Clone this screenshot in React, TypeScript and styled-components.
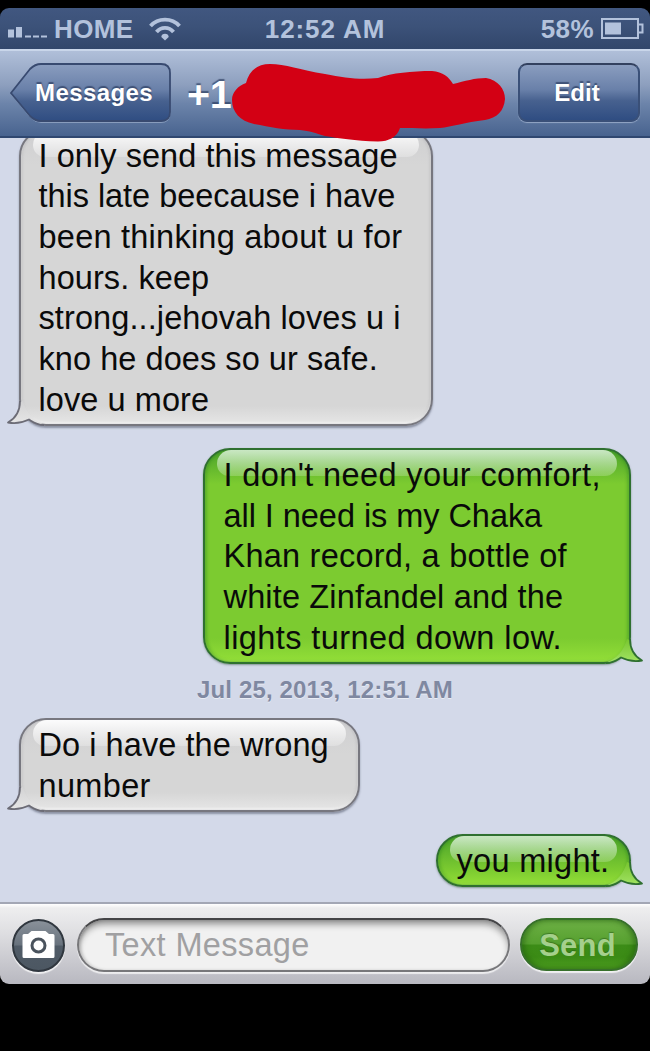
import React from "react";
import styled, { createGlobalStyle, css } from "styled-components";

const GlobalStyle = createGlobalStyle`
  * { box-sizing: border-box; }
  html, body { margin: 0; padding: 0; background: #000; }
  body { font-family: "Liberation Sans", Arial, sans-serif; }
`;

const Screen = styled.main`
  width: 650px;
  height: 1051px;
  padding-top: 8px;
  background: #000;
  overflow: hidden;
  display: flex;
  flex-direction: column;
`;

const StatusBar = styled.header`
  flex: none;
  height: 41px;
  padding: 0 8px;
  display: grid;
  grid-template-columns: 1fr auto 1fr;
  align-items: center;
  border-radius: 9px 9px 0 0;
  background: linear-gradient(#415780, #3c5279 45%, #31466b);
  color: #b3c2dc;
  font-size: 26px;
  font-weight: bold;
  line-height: 38px;
`;

const StatusGroup = styled.div<{ $end?: boolean }>`
  display: flex;
  align-items: center;
  justify-content: ${(p) => (p.$end ? "flex-end" : "flex-start")};
`;

const Tracked = styled.span<{ $track?: number }>`
  display: block;
  white-space: nowrap;
  letter-spacing: ${(p) => p.$track ?? 0}px;
`;

const Carrier = styled(Tracked)`
  margin-left: 6px;
`;

const NavBar = styled.nav`
  position: relative;
  z-index: 2;
  flex: none;
  height: 89px;
  padding: 14px 10px 15px;
  display: flex;
  align-items: flex-start;
  justify-content: space-between;
  border-top: 2px solid #c9d6ea;
  border-bottom: 2px solid #2f4770;
  background: linear-gradient(#b0bfd9, #8d9fbe 40%, #6c84aa 62%, #48638f);
`;

const navLabel = css`
  color: #fff;
  font-weight: bold;
  font-size: 24px;
  text-shadow: 0 -2px 1px rgba(35, 52, 88, 0.65);
`;

const BackButton = styled.button`
  ${navLabel}
  position: relative;
  width: 161px;
  height: 60px;
  margin-top: -2px;
  padding: 0 0 0 25px;
  border: 0;
  background: none;
  font-family: inherit;
  text-align: left;
  line-height: 56px;
`;

const BackShape = styled.svg`
  position: absolute;
  inset: 0;
`;

const ButtonLabel = styled.span<{ $track?: number }>`
  position: relative;
  letter-spacing: ${(p) => p.$track ?? 0}px;
`;

const EditButton = styled.button`
  ${navLabel}
  width: 122px;
  height: 59px;
  margin-top: -2px;
  padding: 0 4px 0 0;
  border: 2px solid #3a5078;
  border-top-color: #33415f;
  border-radius: 9px;
  background: linear-gradient(#8a9dbf, #6980a9 45%, #47618f 65%, #2f4d82);
  box-shadow: 0 1px 1px rgba(190, 205, 228, 0.6);
  font-family: inherit;
`;

const Title = styled.h1`
  margin: 2px auto 0 16px;
  color: #fff;
  font-size: 39.5px;
  letter-spacing: -0.3px;
  line-height: 54px;
  text-shadow: 0 -2px 1px rgba(35, 52, 88, 0.65);
`;

const Redaction = styled.svg`
  position: absolute;
  left: 228px;
  top: 9px;
  overflow: visible;
`;

const Conversation = styled.section`
  flex: none;
  height: 764px;
  overflow: hidden;
  display: flex;
  flex-direction: column;
  background: #d3d9e9;
  padding: 0 19px;
`;

const bubbleTone = {
  grey: css`
    align-self: flex-start;
    padding-left: 17.5px;
    border-color: #77777f;
    background: linear-gradient(#cfcfd1, #d6d6d6 34px, #d6d6d6 calc(100% - 18px), #e6e6e6);
    box-shadow: 0 2px 2px rgba(70, 75, 95, 0.5), inset 2px 0 2px rgba(150, 150, 155, 0.2),
      inset -2px 0 2px rgba(150, 150, 155, 0.2), inset 0 -2px 2px rgba(255, 255, 255, 0.5);
  `,
  green: css`
    align-self: flex-end;
    padding-left: 18.5px;
    border-color: #2f7030;
    background: linear-gradient(#4ba32b, #7ccb30 34px, #7ccb30 calc(100% - 24px), #93df38);
    box-shadow: 0 1px 2px rgba(50, 80, 60, 0.5), inset 2px 0 3px rgba(50, 140, 30, 0.45),
      inset -2px 0 3px rgba(50, 140, 30, 0.45), inset 0 -2px 2px rgba(180, 240, 90, 0.5);
  `,
};

const BubbleBox = styled.article<{ $tone: "grey" | "green"; $w: number; $top: number }>`
  position: relative;
  flex: none;
  width: ${(p) => p.$w}px;
  margin-top: ${(p) => p.$top}px;
  padding-top: 4.8px;
  padding-bottom: 3.8px;
  border: 2px solid;
  border-radius: 27px;
  color: #0a0a0a;
  font-size: 32.5px;
  line-height: 40.65px;
  ${(p) => bubbleTone[p.$tone]}
`;

const Gloss = styled.div<{ $tone: "grey" | "green" }>`
  position: absolute;
  left: 12px;
  right: 12px;
  top: 0;
  height: 26px;
  border-radius: 14px 14px 12px 12px;
  background: ${(p) =>
    p.$tone === "grey"
      ? "linear-gradient(rgba(255,255,255,.95), rgba(255,255,255,.25))"
      : "linear-gradient(rgba(235,250,235,.8), rgba(225,245,215,.25))"};
`;

const Tail = styled.svg<{ $tone: "grey" | "green" }>`
  position: absolute;
  bottom: -2px;
  overflow: visible;
  ${(p) => (p.$tone === "grey" ? "left: -14px;" : "right: -14px; transform: scaleX(-1);")}
`;

const Line = styled(Tracked)`
  position: relative;
`;

const Timestamp = styled.time`
  flex: none;
  align-self: center;
  margin-top: 12px;
  height: 28px;
  color: #7f88a1;
  font-size: 24px;
  font-weight: bold;
  letter-spacing: 0.15px;
  line-height: 28px;
  text-shadow: 0 1px 0 rgba(255, 255, 255, 0.5);
`;

const Composer = styled.footer`
  flex: none;
  height: 82px;
  padding: 12px 12px 0;
  display: flex;
  border-top: 2px solid #a3a7b5;
  border-radius: 0 0 9px 9px;
  background: linear-gradient(#fff, #eeeeef 4px, #dfdfe2 35%, #b8b8c0);
`;

const CameraButton = styled.button`
  width: 53px;
  height: 53px;
  margin: 3px 12px 0 0;
  padding: 0 0 3px;
  border: 2px solid #30373f;
  border-radius: 50%;
  background: linear-gradient(#89919a, #68727d 49%, #505b67 51%, #4c5762);
  box-shadow: 0 2px 1px rgba(255, 255, 255, 0.75);
`;

const CameraIcon = styled.svg`
  display: block;
  margin: 0 auto;
`;

const Field = styled.div`
  width: 433px;
  height: 54px;
  margin: 2px 10px 0 0;
  padding-left: 26px;
  border: 2px solid #77777a;
  border-top-color: #454547;
  border-radius: 27px;
  background: #f1f1f1;
  box-shadow: inset 0 6px 7px -2px rgba(0, 0, 0, 0.42), inset 2px 0 3px rgba(0, 0, 0, 0.15),
    0 2px 1px rgba(255, 255, 255, 0.7);
  color: #a0a0a2;
  font-size: 32.5px;
  line-height: 51px;
`;

const SendButton = styled.button`
  width: 118px;
  height: 53px;
  margin-top: 2px;
  padding: 2px 3px 0 0;
  border: 2px solid #37702a;
  border-radius: 27px;
  background: linear-gradient(#6db045, #56a02f 48%, #3c8c17 52%, #3b8b15 75%, #4d9d20);
  box-shadow: 0 2px 1px rgba(255, 255, 255, 0.75), inset 3px 0 5px rgba(35, 95, 15, 0.5),
    inset -3px 0 5px rgba(35, 95, 15, 0.5);
  color: #a5d08c;
  font-family: inherit;
  font-size: 31px;
  font-weight: bold;
  text-shadow: 0 -1px 1px rgba(30, 80, 15, 0.5);
`;

type TextLine = [text: string, track: number];

function Bubble({ tone, width, top, lines }: { tone: "grey" | "green"; width: number; top: number; lines: TextLine[] }) {
  const grey = tone === "grey";
  const id = `tail-${tone}`;
  return (
    <BubbleBox $tone={tone} $w={width} $top={top}>
      <Gloss $tone={tone} />
      <Tail $tone={tone} width="40" height="30" viewBox="0 0 40 30">
        <defs>
          <linearGradient id={id} x1="0" y1="0" x2="0" y2="1">
            <stop offset="0" stopColor={grey ? "#d3d3d4" : "#78c52f"} />
            <stop offset="1" stopColor={grey ? "#e6e6e6" : "#a2e364"} />
          </linearGradient>
        </defs>
        <path d="M13 6 C13 16 9 22 1 26.500 C9 28 15 27 22 23.500 C26 26 29 28.500 37 28.500 Q21 23 16 5 Z" fill={`url(#${id})`} />
        <path
          d="M13 5 C13 16 9 22 1 26.500 C9 28 15 27 22 23.500 C26 26 29 29 37 29"
          fill="none"
          stroke={grey ? "#6c6c76" : "#2f7030"}
          strokeWidth="1.8"
          strokeLinejoin="round"
        />
      </Tail>
      {lines.map(([text, track]) => (
        <Line key={text} $track={track}>{text}</Line>
      ))}
    </BubbleBox>
  );
}

const SignalIcon = () => (
  <svg width="40" height="20" viewBox="0 0 40 20" fill="#b3c2dc">
    <rect x="0" y="10.5" width="6" height="8" />
    <rect x="8" y="8" width="6" height="10.500" />
    <rect x="17" y="16.500" width="6" height="2" />
    <rect x="25" y="16.500" width="6" height="2" />
    <rect x="33" y="16.500" width="6" height="2" />
  </svg>
);

const WifiIcon = styled.svg`
  margin-left: 14px;
`;

const BatteryIcon = styled.svg`
  margin-left: 7px;
  margin-right: -2px;
`;

export default function App() {
  return (
    <>
      <GlobalStyle />
      <Screen>
        <StatusBar>
          <StatusGroup>
            <SignalIcon />
            <Carrier $track={0.4}>HOME</Carrier>
            <WifiIcon width="34" height="24" viewBox="0 0 34 24" fill="none" stroke="#b3c2dc">
              <path d="M2.500 9 C10 0.500 24 0.500 31.500 9" strokeWidth="3.800" />
              <path d="M8.500 15 C13 9.500 21 9.500 25.500 15" strokeWidth="3.800" />
              <path d="M17 23.500 L13.300 20 C13 15.500 21 15.500 20.700 20 Z" fill="#b3c2dc" stroke="none" />
            </WifiIcon>
          </StatusGroup>
          <Tracked $track={0.9}>12:52 AM</Tracked>
          <StatusGroup $end>
            <Tracked $track={0.4}>58%</Tracked>
            <BatteryIcon width="43" height="22" viewBox="0 0 43 22" fill="none" stroke="#b3c2dc" strokeWidth="2">
              <path d="M1 1 H37 V6.500 H41.500 V14.500 H37 V20 H1 Z" />
              <path d="M37 6 V15" />
              <rect x="4" y="4.500" width="16" height="12" fill="#b3c2dc" stroke="none" />
            </BatteryIcon>
          </StatusGroup>
        </StatusBar>

        <NavBar>
          <BackButton>
            <BackShape width="161" height="60" viewBox="0 0 161 60">
              <defs>
                <linearGradient id="back" x1="0" y1="0" x2="0" y2="1">
                  <stop offset="0" stopColor="#8a9dbf" />
                  <stop offset="0.45" stopColor="#6980a9" />
                  <stop offset="0.65" stopColor="#47618f" />
                  <stop offset="1" stopColor="#2f4d82" />
                </linearGradient>
              </defs>
              <path d="M1 31 L20 7 Q25 2 31 2 H151 Q160 2 160 11 V50 Q160 59.500 151 59.500 H31 Q25 59.500 20 54 Z" fill="none" stroke="#a9b9d3" strokeOpacity=".6" />
              <path d="M1 30 L20 6 Q25 1 31 1 H151 Q160 1 160 10 V49 Q160 58 151 58 H31 Q25 58 20 53 Z" fill="url(#back)" stroke="#384a70" strokeWidth="1.800" />
            </BackShape>
            <ButtonLabel $track={0.4}>Messages</ButtonLabel>
          </BackButton>
          <Title>+1</Title>
          <EditButton>
            <ButtonLabel>Edit</ButtonLabel>
          </EditButton>
          <Redaction width="280" height="84" viewBox="228 60 280 84">
            <path
              d="M232 100 C232 92 238 86 246 83 C249 71 257 64 270 64 C285 64 300 70 325 74 C345 78 360 80 378 78 C392 73 412 71 432 71 C443 72 449 77 453 84 C465 81 475 78 486 78 C498 80 505 89 505 99 C504 111 497 118 485 120 C465 122 452 127 440 128 C425 129 412 128 400 128 C397 137 389 141.500 378 141.500 C355 141 338 138 325 136 C315 133 310 131 300 130 C285 130 270 127 254 124 C240 121 232 112 232 100 Z"
              fill="#d30014"
            />
          </Redaction>
        </NavBar>

        <Conversation>
          <Bubble
            tone="grey"
            width={414}
            top={-9}
            lines={[
              ["I only send this message", 0.06],
              ["this late beecause i have", -0.04],
              ["been thinking about u for", 0.24],
              ["hours. keep", 0.08],
              ["strong...jehovah loves u i", 0.1],
              ["kno he does so ur safe.", 0.06],
              ["love u more", 0.08],
            ]}
          />
          <Bubble
            tone="green"
            width={428}
            top={22}
            lines={[
              ["I don't need your comfort,", 0.38],
              ["all I need is my Chaka", -0.05],
              ["Khan record, a bottle of", 0.23],
              ["white Zinfandel and the", 0.16],
              ["lights turned down low.", 0.42],
            ]}
          />
          <Timestamp>Jul 25, 2013, 12:51 AM</Timestamp>
          <Bubble
            tone="grey"
            width={341}
            top={14}
            lines={[
              ["Do i have the wrong", 0.06],
              ["number", 0.35],
            ]}
          />
          <Bubble tone="green" width={195} top={22} lines={[["you might.", 0.3]]} />
        </Conversation>

        <Composer>
          <CameraButton aria-label="Camera">
            <CameraIcon width="33" height="29" viewBox="0 0 33 29">
              <path d="M2 4 H6 L9.500 1 H23.500 L27 4 H31 Q32.500 4 32.500 5.500 V26.500 Q32.500 28 31 28 H2 Q.5 28 .5 26.500 V5.500 Q.5 4 2 4 Z" fill="#fff" />
              <circle cx="16.500" cy="15.500" r="6.500" fill="#fff" stroke="#4a535d" strokeWidth="3" />
            </CameraIcon>
          </CameraButton>
          <Field>
            <Tracked $track={0.35}>Text Message</Tracked>
          </Field>
          <SendButton>
            <Tracked $track={0.2}>Send</Tracked>
          </SendButton>
        </Composer>
      </Screen>
    </>
  );
}
